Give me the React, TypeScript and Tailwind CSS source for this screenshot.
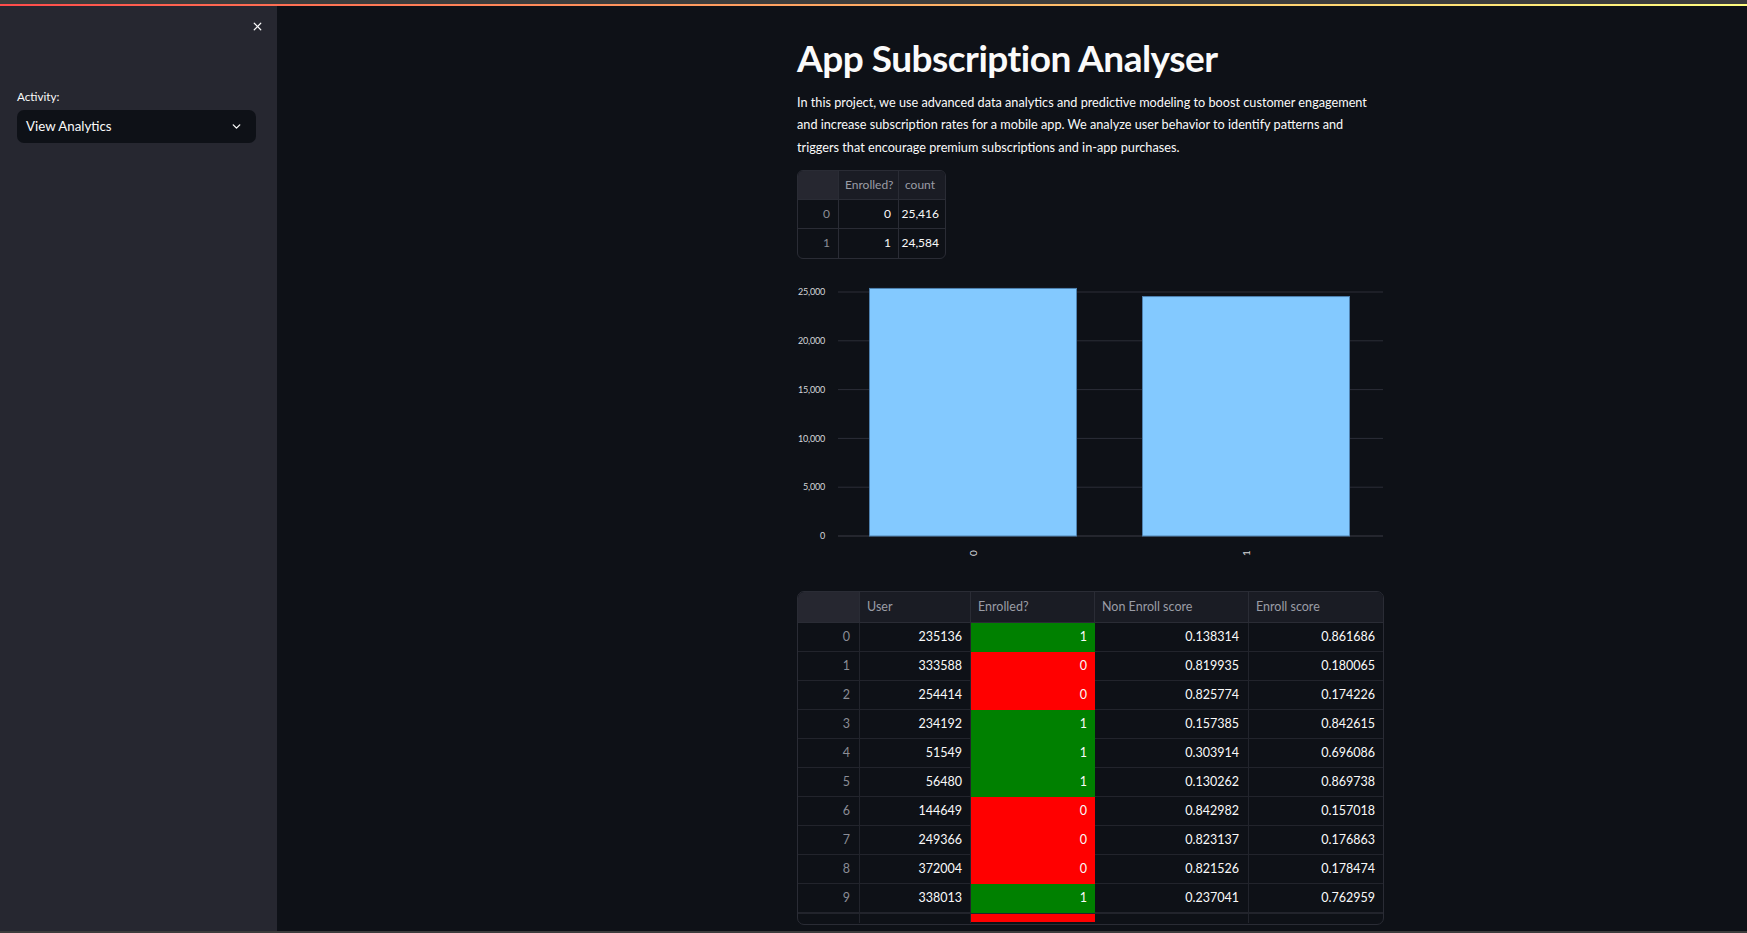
import { ChevronDown, X } from "lucide-react";

const FONT = "font-['Source_Sans_Pro','Lato','Roboto',sans-serif]";

type Row = {
  idx: number;
  user: number | string;
  enrolled: number;
  nonEnroll: string;
  enroll: string;
};

const rows: Row[] = [
  { idx: 0, user: 235136, enrolled: 1, nonEnroll: "0.138314", enroll: "0.861686" },
  { idx: 1, user: 333588, enrolled: 0, nonEnroll: "0.819935", enroll: "0.180065" },
  { idx: 2, user: 254414, enrolled: 0, nonEnroll: "0.825774", enroll: "0.174226" },
  { idx: 3, user: 234192, enrolled: 1, nonEnroll: "0.157385", enroll: "0.842615" },
  { idx: 4, user: 51549, enrolled: 1, nonEnroll: "0.303914", enroll: "0.696086" },
  { idx: 5, user: 56480, enrolled: 1, nonEnroll: "0.130262", enroll: "0.869738" },
  { idx: 6, user: 144649, enrolled: 0, nonEnroll: "0.842982", enroll: "0.157018" },
  { idx: 7, user: 249366, enrolled: 0, nonEnroll: "0.823137", enroll: "0.176863" },
  { idx: 8, user: 372004, enrolled: 0, nonEnroll: "0.821526", enroll: "0.178474" },
  { idx: 9, user: 338013, enrolled: 1, nonEnroll: "0.237041", enroll: "0.762959" },
];

const counts = [
  { idx: 0, value: 0, count: "25,416" },
  { idx: 1, value: 1, count: "24,584" },
];

function CountTable() {
  return (
    <div className="w-[149px] overflow-hidden rounded-[6px] border border-[#2a2c35] text-[12px]">
      <div className="grid grid-cols-[41px_60px_46px] h-[29px] border-b border-[#2a2c35] text-[#9a9ca6]">
        <div className="border-r border-[#2a2c35] bg-[#262730]" />
        <div className="flex items-center border-r border-[#2a2c35] bg-[#1a1c24] px-[6px]">Enrolled?</div>
        <div className="flex items-center bg-[#1a1c24] px-[6px]">count</div>
      </div>
      {counts.map((c, i) => (
        <div
          key={c.idx}
          className={`grid grid-cols-[41px_60px_46px] h-[29px] ${i === 0 ? "border-b border-[#2a2c35]" : ""}`}
        >
          <div className="flex items-center justify-end border-r border-[#2a2c35] pr-[8px] text-[#8b8d96]">{c.idx}</div>
          <div className="flex items-center justify-end border-r border-[#2a2c35] pr-[7px] text-[#fafafa]">{c.value}</div>
          <div className="flex items-center justify-end pr-[6px] text-[#fafafa]">{c.count}</div>
        </div>
      ))}
    </div>
  );
}

function BarChart() {
  const ticks = [25000, 20000, 15000, 10000, 5000, 0];
  const base = 266;
  const scale = 244 / 25000;
  const bars = [
    { label: "0", value: 25416, x: 72 },
    { label: "1", value: 24584, x: 345 },
  ];
  return (
    <svg width="587" height="318" className="block">
      {ticks.map((t) => {
        const y = base - t * scale;
        return (
          <g key={t}>
            <line x1="41" x2="586" y1={y} y2={y} stroke={t === 0 ? "#3a3c47" : "#2c2e38"} strokeWidth="1" />
            <text
              x="28"
              y={y + 3.2}
              textAnchor="end"
              fill="#d5d6da"
              fontSize="9"
              letterSpacing="-0.2"
              fontFamily="Lato, Roboto, sans-serif"
            >
              {t.toLocaleString("en-US")}
            </text>
          </g>
        );
      })}
      {bars.map((b) => {
        const h = b.value * scale;
        return (
          <g key={b.label}>
            <rect x={b.x + 0.5} y={base - h + 0.5} width="207" height={h - 0.5} fill="#83c9ff" stroke="#4f82b0" strokeWidth="1" />
            <text
              x={b.x + 104}
              y={283}
              transform={`rotate(-90 ${b.x + 104} 283)`}
              textAnchor="middle"
              dominantBaseline="central"
              fill="#d5d6da"
              fontSize="10"
              fontFamily="Lato, Roboto, sans-serif"
            >
              {b.label}
            </text>
          </g>
        );
      })}
    </svg>
  );
}

const COLS = "grid grid-cols-[62px_111px_124px_154px_134px]";

function ScoreTable() {
  return (
    <div className="h-[334px] w-[587px] overflow-hidden rounded-[7px] border border-[#2a2c35] text-[12.5px]">
      <div className={`${COLS} h-[31px] border-b border-[#2a2c35] text-[#9a9ca6]`}>
        <div className="border-r border-[#2a2c35] bg-[#262730]" />
        <div className="flex items-center border-r border-[#2a2c35] bg-[#1a1c24] px-[7px]">User</div>
        <div className="flex items-center border-r border-[#2a2c35] bg-[#1a1c24] px-[7px]">Enrolled?</div>
        <div className="flex items-center border-r border-[#2a2c35] bg-[#1a1c24] px-[7px]">Non Enroll score</div>
        <div className="flex items-center bg-[#1a1c24] px-[7px]">Enroll score</div>
      </div>
      {rows.map((r) => {
        const on = r.enrolled === 1;
        return (
          <div key={r.idx} className={`${COLS} h-[29px]`}>
            <div className="flex items-center justify-end border-r border-b border-[#22242c] pr-[9px] text-[#8b8d96]">{r.idx}</div>
            <div className="flex items-center justify-end border-r border-b border-[#22242c] pr-[8px] text-[#fafafa]">{r.user}</div>
            <div
              className={`flex items-center justify-end border-b pr-[8px] text-[#fafafa] ${
                on ? "bg-[#008000] border-[#008000]" : "bg-[#ff0000] border-[#ff0000]"
              }`}
            >
              {r.enrolled}
            </div>
            <div className="flex items-center justify-end border-r border-b border-[#22242c] pr-[9px] text-[#fafafa]">{r.nonEnroll}</div>
            <div className="flex items-center justify-end border-b border-[#22242c] pr-[8px] text-[#fafafa]">{r.enroll}</div>
          </div>
        );
      })}
      {/* next row, cut off by the scroll area */}
      <div className={`${COLS} h-[10px] border-t border-[#22242c]`}>
        <div className="border-r border-[#22242c]" />
        <div className="border-r border-[#22242c]" />
        <div className="h-[8px] bg-[#ff0000]" />
        <div className="border-r border-[#22242c]" />
        <div />
      </div>
    </div>
  );
}

export default function App() {
  return (
    <div className={`flex h-[933px] w-full flex-col overflow-hidden bg-[#0e1117] ${FONT}`}>
      <div className="h-[4px] bg-[#3c3c3c]" />
      <div className="h-[2px] bg-gradient-to-r from-[#ff4b4b] to-[#fffd80]" />
      <div className="flex min-h-0 flex-1">
        <aside className="w-[277px] shrink-0 bg-[#262730] pl-[17px] pr-[21px] pt-[14px]">
          <div className="-mr-[8px] flex justify-end">
            <X className="h-[13px] w-[13px] text-[#fafafa]" strokeWidth={2.2} />
          </div>
          <div className="mt-[55px] text-[11.7px] leading-[16px] text-[#fafafa]">Activity:</div>
          <div className="mt-[6px] flex h-[33px] items-center justify-between rounded-[7px] bg-[#0e1117] pl-[9px] pr-[13px]">
            <span className="text-[13.3px] text-[#fafafa]">View Analytics</span>
            <ChevronDown className="h-[13px] w-[13px] text-[#fafafa]" strokeWidth={2.5} />
          </div>
        </aside>
        <main className="min-w-0 flex-1 pl-[520px] pt-[31px]">
          <div className="w-[587px]">
            <h1 className="text-[37px] font-bold leading-[42px] tracking-[-0.5px] text-[#fafafa]">
              App Subscription Analyser
            </h1>
            <p className="mt-[12px] text-[12.7px] leading-[22.3px] text-[#fafafa]">
              <span className="block whitespace-nowrap">
                In this project, we use advanced data analytics and predictive modeling to boost customer engagement
              </span>
              <span className="block whitespace-nowrap">
                and increase subscription rates for a mobile app. We analyze user behavior to identify patterns and
              </span>
              <span className="block whitespace-nowrap">
                triggers that encourage premium subscriptions and in-app purchases.
              </span>
            </p>
            <div className="mt-[12px]">
              <CountTable />
            </div>
            <div className="mt-[11px]">
              <BarChart />
            </div>
            <div className="mt-[3px]">
              <ScoreTable />
            </div>
          </div>
        </main>
      </div>
      <div className="h-[2px] bg-[#3c3c3c]" />
    </div>
  );
}
